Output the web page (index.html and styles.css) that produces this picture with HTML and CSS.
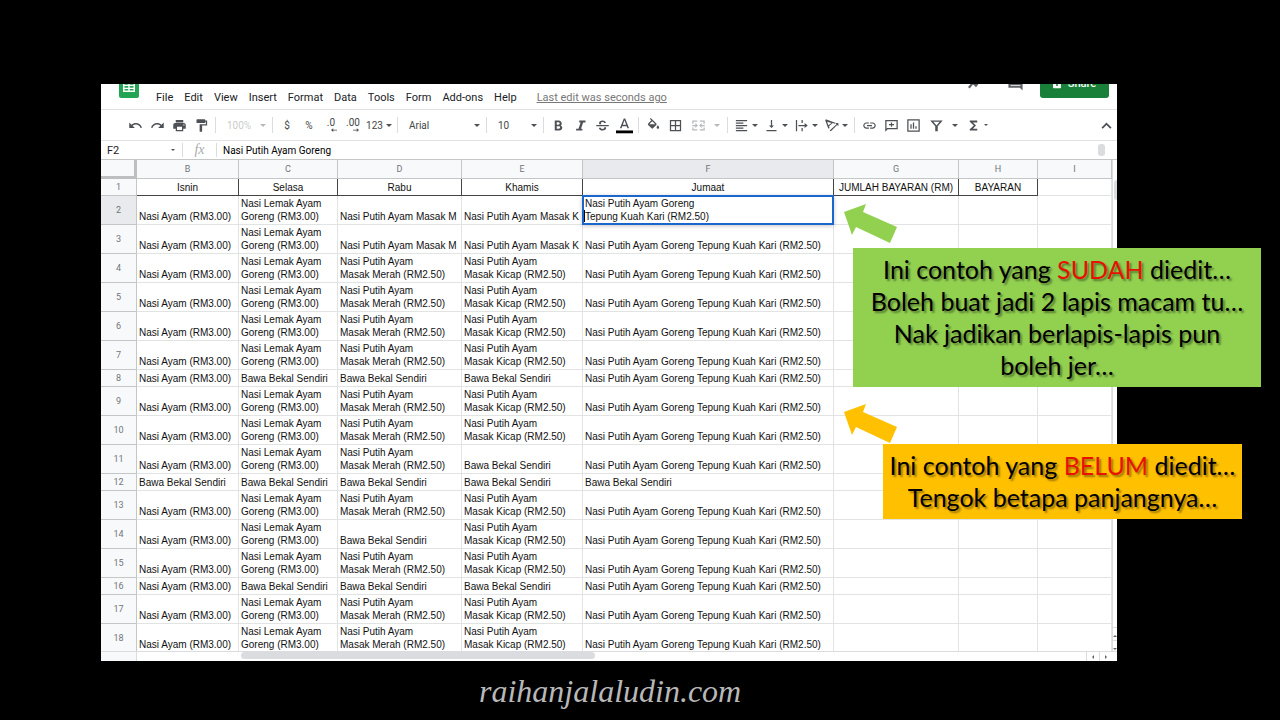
FILE: index.html
```html
<!DOCTYPE html>
<html lang="ms">
<head>
    <meta charset="UTF-8">
    <meta name="viewport" content="width=device-width, initial-scale=1.0">
    <title>raihanjalaludin.com</title>
    <link rel="stylesheet" href="styles.css">
</head>
<body>
    <main class="slide">
        <div class="sheet">
            <!-- Menu bar -->
            <header class="menubar">
                <svg class="logo" viewBox="0 0 20 27"><rect width="20" height="27" rx="2" fill="#23a455"/><path d="M4 10h12v11H4z" fill="#fff"/><path d="M5.500 11.500h3.800v2.200H5.500zM10.700 11.500h3.800v2.200h-3.800zM5.500 15h3.800v1.800H5.500zM10.700 15h3.800v1.800h-3.800zM5.500 18h3.800v1.600H5.500zM10.700 18h3.800v1.600h-3.800z" fill="#23a455"/></svg>
                <nav class="menu">
                    <button>File</button>
                    <button>Edit</button>
                    <button>View</button>
                    <button>Insert</button>
                    <button>Format</button>
                    <button>Data</button>
                    <button>Tools</button>
                    <button>Form</button>
                    <button>Add-ons</button>
                    <button>Help</button>
                </nav>
                <a class="last-edit" href="#">Last edit was seconds ago</a>
                <div class="header-actions">
                    <button class="head-icon" aria-label="Explore"><svg viewBox="0 0 24 24"><path d="M4 18l6-7 4 4 7-9" fill="none" stroke="#5f6368" stroke-width="3"/></svg></button>
                    <button class="head-icon" aria-label="Comments"><svg viewBox="0 0 24 24"><path d="M2 2h20v20l-4-4H2z" fill="#5f6368"/><path d="M5 6h14v1H5zM5 10h14v1H5zM5 14h14v1H5z" fill="#fff"/></svg></button>
                    <button class="share"><svg viewBox="0 0 10 14"><rect y="5" width="10" height="8" rx="1" fill="#fff"/><path d="M2.500 5V3a2.500 2.500 0 0 1 5 0v2" fill="none" stroke="#fff" stroke-width="1.500"/><circle cx="5" cy="9" r="1.300" fill="#188038"/></svg>Share</button>
                </div>
            </header>

            <!-- Toolbar -->
            <div class="toolbar">
                <button class="tool" aria-label="Undo"><svg viewBox="0 0 24 24"><path d="M12.500 8c-2.650 0-5.050.990-6.900 2.600L2 7v9h9l-3.620-3.620c1.390-1.160 3.160-1.880 5.120-1.880 3.540 0 6.550 2.310 7.600 5.500l2.370-.780C21.080 11.030 17.150 8 12.500 8z"/></svg></button>
                <button class="tool" aria-label="Redo"><svg viewBox="0 0 24 24"><path d="M18.400 10.600C16.550 8.990 14.150 8 11.500 8c-4.650 0-8.580 3.030-9.960 7.220L3.900 16c1.050-3.190 4.050-5.500 7.600-5.500 1.950 0 3.730.720 5.120 1.880L13 16h9V7l-3.600 3.600z"/></svg></button>
                <button class="tool" aria-label="Print"><svg viewBox="0 0 24 24"><path d="M19 8H5c-1.660 0-3 1.340-3 3v6h4v4h12v-4h4v-6c0-1.660-1.340-3-3-3zm-3 11H8v-5h8v5zm3-7c-.550 0-1-.450-1-1s.450-1 1-1 1 .450 1 1-.450 1-1 1zm-1-9H6v4h12V3z"/></svg></button>
                <button class="tool" aria-label="Paint format"><svg viewBox="0 0 24 24"><path d="M18 4V3c0-.550-.450-1-1-1H5c-.550 0-1 .450-1 1v4c0 .550.450 1 1 1h12c.550 0 1-.450 1-1V6h1v4H9v11c0 .550.450 1 1 1h2c.550 0 1-.450 1-1v-9h8V4h-3z"/></svg></button>
                <span class="sep"></span>
                <label class="picker picker-small disabled"><select aria-label="Zoom" disabled><option>100%</option></select></label>
                <span class="sep"></span>
                <button class="tool">$</button>
                <button class="tool">%</button>
                <button class="tool decimal" aria-label="Decrease decimal places">.0<svg viewBox="0 0 8 5"><path d="M3 0v2h5v1H3v2L0 2.500z"/></svg></button>
                <button class="tool decimal" aria-label="Increase decimal places">.00<svg viewBox="0 0 8 5"><path d="M5 0v2H0v1h5v2l3-2.500z"/></svg></button>
                <button class="tool split">123<i class="caret"></i></button>
                <span class="sep"></span>
                <label class="picker picker-font"><select aria-label="Font"><option>Arial</option></select></label>
                <span class="sep"></span>
                <label class="picker picker-small"><select aria-label="Font size"><option>10</option></select></label>
                <span class="sep"></span>
                <button class="tool" aria-label="Bold"><svg viewBox="0 0 24 24"><path d="M15.600 11.800c1-.700 1.600-1.800 1.600-2.800 0-2.800-2.200-5-5-5H6v16h7.500c2.500 0 4.500-2 4.500-4.500 0-1.600-.900-3-2.400-3.700zM9.200 6.800h2.600c1.100 0 2 .900 2 2s-.900 1.900-2 1.900H9.200zm3.400 10.300H9.200v-3.900h3.400c1.100 0 2 .900 2 2s-.900 1.900-2 1.900z"/></svg></button>
                <button class="tool" aria-label="Italic"><svg viewBox="0 0 24 24"><path d="M10 4v3h2.210l-3.420 10H5v3h10v-3h-2.210l3.420-10H20V4z"/></svg></button>
                <button class="tool" aria-label="Strikethrough"><svg viewBox="0 0 24 24"><path d="M17.500 8c-.400-2.300-2.300-4-5.500-4-3.100 0-5.500 1.500-5.500 4.200 0 .7.200 1.300.500 1.800h3.800c-.800-.4-1.300-.9-1.300-1.700C9.500 7.100 10.500 6.500 12 6.500s2.400.600 2.600 1.500zM2 11.200h20v2H2zM6.200 15.500c.200 3 2.600 4.500 5.900 4.500 3.400 0 5.700-1.600 5.700-4.400 0-.400 0-.700-.100-1h-3.200c.2.300.3.600.3 1 0 1.200-1.100 1.800-2.700 1.800-1.700 0-2.700-.700-2.900-1.900z"/></svg></button>
                <button class="tool text-color" aria-label="Text color"><svg viewBox="0 0 24 24"><path d="M11 2L5.500 16h2.250l1.120-3h6.250l1.120 3h2.250L13 2h-2zm-1.380 9L12 4.670 14.380 11H9.620z"/><path d="M0 19h24v4H0z" fill="#000"/></svg></button>
                <span class="sep"></span>
                <button class="tool" aria-label="Fill color"><svg viewBox="0 0 24 24"><path d="M16.560 8.940L7.620 0 6.210 1.410l2.380 2.380-5.150 5.150c-.590.590-.590 1.540 0 2.120l5.500 5.500c.290.290.680.440 1.060.440s.770-.150 1.060-.440l5.500-5.500c.590-.580.590-1.530 0-2.120zM5.210 10L10 5.210 14.790 10H5.210zM19 11.500s-2 2.170-2 3.500c0 1.100.900 2 2 2s2-.900 2-2c0-1.330-2-3.500-2-3.500z"/></svg></button>
                <button class="tool" aria-label="Borders"><svg viewBox="0 0 24 24"><path d="M3 3v18h18V3H3zm8 16H5v-6h6v6zm0-8H5V5h6v6zm8 8h-6v-6h6v6zm0-8h-6V5h6v6z"/></svg></button>
                <button class="tool split-wide disabled" aria-label="Merge cells" disabled><svg viewBox="0 0 24 24"><path d="M2 4h8v2H4v3H2zM14 4h8v5h-2V6h-6zM2 15h2v3h6v2H2zM20 15h2v5h-8v-2h6zM2 11h5V8l4 4-4 4v-3H2zM22 11h-5V8l-4 4 4 4v-3h5z"/></svg><i class="caret"></i></button>
                <span class="sep"></span>
                <button class="tool split" aria-label="Horizontal align"><svg viewBox="0 0 24 24"><path d="M3 3h18v2H3zM3 7h12v2H3zM3 11h18v2H3zM3 15h12v2H3zM3 19h18v2H3z"/></svg><i class="caret"></i></button>
                <button class="tool split" aria-label="Vertical align"><svg viewBox="0 0 24 24"><path d="M16 12h-3V3h-2v9H8l4 4zM4 19h16v2H4z"/></svg><i class="caret"></i></button>
                <button class="tool split" aria-label="Text wrapping"><svg viewBox="0 0 24 24"><path d="M3 3h2v18H3zM12 3h2v5h-2zM12 16h2v5h-2zM7 11h10V8l5 4-5 4v-3H7z"/></svg><i class="caret"></i></button>
                <button class="tool split" aria-label="Text rotation"><svg viewBox="0 0 24 24"><path d="M2 4l5 13 2-1-1-3 6-5 3 1 2-1L3 2zm3 2l7 2-5 3.500zM9 20L20 10l-2-2h5v5l-2-2-10 10z"/></svg><i class="caret"></i></button>
                <span class="sep"></span>
                <button class="tool" aria-label="Insert link"><svg viewBox="0 0 24 24"><path d="M3.900 12c0-1.710 1.390-3.100 3.100-3.100h4V7H7c-2.760 0-5 2.240-5 5s2.240 5 5 5h4v-1.900H7c-1.710 0-3.100-1.390-3.100-3.100zM8 13h8v-2H8v2zm9-6h-4v1.900h4c1.710 0 3.100 1.390 3.100 3.100s-1.390 3.100-3.100 3.100h-4V17h4c2.760 0 5-2.240 5-5s-2.240-5-5-5z"/></svg></button>
                <button class="tool" aria-label="Insert comment"><svg viewBox="0 0 24 24"><path d="M2 3h20v15H6l-4 4zm2 2v12l1-1h15V5zM11 7h2v2.500h3v2h-3V14h-2v-2.500H8v-2h3z"/></svg></button>
                <button class="tool" aria-label="Insert chart"><svg viewBox="0 0 24 24"><path d="M2 2h20v20H2zm2 2v16h16V4zM7 10h2v7H7zM11 7h2v10h-2zM15 13h2v4h-2z"/></svg></button>
                <button class="tool split-wide" aria-label="Filter"><svg viewBox="0 0 24 24"><path d="M2 4h20l-8 9v8h-4v-8zm5 2l5 6 5-6z"/></svg><i class="caret"></i></button>
                <button class="tool split" aria-label="Functions"><svg viewBox="0 0 24 24"><path d="M18 4H6v2l6.500 6L6 18v2h12v-3h-7l5-5-5-5h7z"/></svg><i class="caret small"></i></button>
                <button class="tool collapse" aria-label="Hide the menus"><svg viewBox="0 0 24 24"><path d="M12 7l-8 8 2 2 6-6 6 6 2-2z"/></svg></button>
            </div>

            <!-- Formula bar -->
            <div class="formula-bar">
                <input class="name-box" type="text" value="F2" aria-label="Name box">
                <i class="caret small"></i>
                <span class="fx">fx</span>
                <input class="formula" type="text" value="Nasi Putih Ayam Goreng" aria-label="Formula">
                <span class="formula-thumb"></span>
            </div>

            <!-- Grid -->
            <div class="grid-area">
                <table class="grid">
                    <colgroup>
                        <col class="col-num"><col class="col-b"><col class="col-c"><col class="col-d"><col class="col-e"><col class="col-f"><col class="col-g"><col class="col-h"><col>
                    </colgroup>
                    <thead>
                        <tr><td class="corner"></td><th>B</th><th>C</th><th>D</th><th>E</th><th class="active">F</th><th>G</th><th>H</th><th>I</th></tr>
                    </thead>
                    <tbody>
                        <tr class="titles"><th>1</th><td>Isnin</td><td>Selasa</td><td>Rabu</td><td>Khamis</td><td>Jumaat</td><td>JUMLAH BAYARAN (RM)</td><td>BAYARAN</td><td></td></tr>
                        <tr class="tall">
                            <th class="active">2</th><td>Nasi Ayam (RM3.00)</td><td>Nasi Lemak Ayam<br>Goreng (RM3.00)</td><td>Nasi Putih Ayam Masak M</td><td>Nasi Putih Ayam Masak K</td>
                            <td class="editing"><textarea class="editor" aria-label="F2">Nasi Putih Ayam Goreng
Tepung Kuah Kari (RM2.50)</textarea><span class="cursor"></span></td><td></td><td></td><td></td>
                        </tr>
                        <tr class="tall"><th>3</th><td>Nasi Ayam (RM3.00)</td><td>Nasi Lemak Ayam<br>Goreng (RM3.00)</td><td>Nasi Putih Ayam Masak M</td><td>Nasi Putih Ayam Masak K</td><td>Nasi Putih Ayam Goreng Tepung Kuah Kari (RM2.50)</td><td></td><td></td><td></td></tr>
                        <tr class="tall"><th>4</th><td>Nasi Ayam (RM3.00)</td><td>Nasi Lemak Ayam<br>Goreng (RM3.00)</td><td>Nasi Putih Ayam<br>Masak Merah (RM2.50)</td><td>Nasi Putih Ayam<br>Masak Kicap (RM2.50)</td><td>Nasi Putih Ayam Goreng Tepung Kuah Kari (RM2.50)</td><td></td><td></td><td></td></tr>
                        <tr class="tall"><th>5</th><td>Nasi Ayam (RM3.00)</td><td>Nasi Lemak Ayam<br>Goreng (RM3.00)</td><td>Nasi Putih Ayam<br>Masak Merah (RM2.50)</td><td>Nasi Putih Ayam<br>Masak Kicap (RM2.50)</td><td>Nasi Putih Ayam Goreng Tepung Kuah Kari (RM2.50)</td><td></td><td></td><td></td></tr>
                        <tr class="tall"><th>6</th><td>Nasi Ayam (RM3.00)</td><td>Nasi Lemak Ayam<br>Goreng (RM3.00)</td><td>Nasi Putih Ayam<br>Masak Merah (RM2.50)</td><td>Nasi Putih Ayam<br>Masak Kicap (RM2.50)</td><td>Nasi Putih Ayam Goreng Tepung Kuah Kari (RM2.50)</td><td></td><td></td><td></td></tr>
                        <tr class="tall"><th>7</th><td>Nasi Ayam (RM3.00)</td><td>Nasi Lemak Ayam<br>Goreng (RM3.00)</td><td>Nasi Putih Ayam<br>Masak Merah (RM2.50)</td><td>Nasi Putih Ayam<br>Masak Kicap (RM2.50)</td><td>Nasi Putih Ayam Goreng Tepung Kuah Kari (RM2.50)</td><td></td><td></td><td></td></tr>
                        <tr><th>8</th><td>Nasi Ayam (RM3.00)</td><td>Bawa Bekal Sendiri</td><td>Bawa Bekal Sendiri</td><td>Bawa Bekal Sendiri</td><td>Nasi Putih Ayam Goreng Tepung Kuah Kari (RM2.50)</td><td></td><td></td><td></td></tr>
                        <tr class="tall"><th>9</th><td>Nasi Ayam (RM3.00)</td><td>Nasi Lemak Ayam<br>Goreng (RM3.00)</td><td>Nasi Putih Ayam<br>Masak Merah (RM2.50)</td><td>Nasi Putih Ayam<br>Masak Kicap (RM2.50)</td><td>Nasi Putih Ayam Goreng Tepung Kuah Kari (RM2.50)</td><td></td><td></td><td></td></tr>
                        <tr class="tall"><th>10</th><td>Nasi Ayam (RM3.00)</td><td>Nasi Lemak Ayam<br>Goreng (RM3.00)</td><td>Nasi Putih Ayam<br>Masak Merah (RM2.50)</td><td>Nasi Putih Ayam<br>Masak Kicap (RM2.50)</td><td>Nasi Putih Ayam Goreng Tepung Kuah Kari (RM2.50)</td><td></td><td></td><td></td></tr>
                        <tr class="tall"><th>11</th><td>Nasi Ayam (RM3.00)</td><td>Nasi Lemak Ayam<br>Goreng (RM3.00)</td><td>Nasi Putih Ayam<br>Masak Merah (RM2.50)</td><td>Bawa Bekal Sendiri</td><td>Nasi Putih Ayam Goreng Tepung Kuah Kari (RM2.50)</td><td></td><td></td><td></td></tr>
                        <tr><th>12</th><td>Bawa Bekal Sendiri</td><td>Bawa Bekal Sendiri</td><td>Bawa Bekal Sendiri</td><td>Bawa Bekal Sendiri</td><td>Bawa Bekal Sendiri</td><td></td><td></td><td></td></tr>
                        <tr class="tall"><th>13</th><td>Nasi Ayam (RM3.00)</td><td>Nasi Lemak Ayam<br>Goreng (RM3.00)</td><td>Nasi Putih Ayam<br>Masak Merah (RM2.50)</td><td>Nasi Putih Ayam<br>Masak Kicap (RM2.50)</td><td>Nasi Putih Ayam Goreng Tepung Kuah Kari (RM2.50)</td><td></td><td></td><td></td></tr>
                        <tr class="tall"><th>14</th><td>Nasi Ayam (RM3.00)</td><td>Nasi Lemak Ayam<br>Goreng (RM3.00)</td><td>Bawa Bekal Sendiri</td><td>Nasi Putih Ayam<br>Masak Kicap (RM2.50)</td><td>Nasi Putih Ayam Goreng Tepung Kuah Kari (RM2.50)</td><td></td><td></td><td></td></tr>
                        <tr class="tall"><th>15</th><td>Nasi Ayam (RM3.00)</td><td>Nasi Lemak Ayam<br>Goreng (RM3.00)</td><td>Nasi Putih Ayam<br>Masak Merah (RM2.50)</td><td>Nasi Putih Ayam<br>Masak Kicap (RM2.50)</td><td>Nasi Putih Ayam Goreng Tepung Kuah Kari (RM2.50)</td><td></td><td></td><td></td></tr>
                        <tr><th>16</th><td>Nasi Ayam (RM3.00)</td><td>Bawa Bekal Sendiri</td><td>Bawa Bekal Sendiri</td><td>Bawa Bekal Sendiri</td><td>Nasi Putih Ayam Goreng Tepung Kuah Kari (RM2.50)</td><td></td><td></td><td></td></tr>
                        <tr class="tall"><th>17</th><td>Nasi Ayam (RM3.00)</td><td>Nasi Lemak Ayam<br>Goreng (RM3.00)</td><td>Nasi Putih Ayam<br>Masak Merah (RM2.50)</td><td>Nasi Putih Ayam<br>Masak Kicap (RM2.50)</td><td>Nasi Putih Ayam Goreng Tepung Kuah Kari (RM2.50)</td><td></td><td></td><td></td></tr>
                        <tr class="tall"><th>18</th><td>Nasi Ayam (RM3.00)</td><td>Nasi Lemak Ayam<br>Goreng (RM3.00)</td><td>Nasi Putih Ayam<br>Masak Merah (RM2.50)</td><td>Nasi Putih Ayam<br>Masak Kicap (RM2.50)</td><td>Nasi Putih Ayam Goreng Tepung Kuah Kari (RM2.50)</td><td></td><td></td><td></td></tr>
                    </tbody>
                </table>
                <div class="vscroll">
                    <span class="vthumb"></span>
                    <span class="varrow"><svg viewBox="0 0 4 4"><path d="M0 3l2-2 2 2z"/></svg></span>
                    <span class="varrow"><svg viewBox="0 0 4 4"><path d="M0 1l2 2 2-2z"/></svg></span>
                </div>
            </div>
            <div class="hscroll">
                <span class="hscroll-head"></span>
                <span class="hthumb"></span>
                <span class="harrow"><svg viewBox="0 0 4 4"><path d="M3 0L1 2l2 2z"/></svg></span>
                <span class="harrow"><svg viewBox="0 0 4 4"><path d="M1 0l2 2-2 2z"/></svg></span>
            </div>

            <!-- Notes over the sheet -->
            <svg class="arrow arrow-done" viewBox="0 0 54 39"><path d="M0 8L22 0l-3 8 34 15-7 16-34-16-4 8z"/></svg>
            <p class="note note-done">Ini contoh yang <em>SUDAH</em> diedit…<br>Boleh buat jadi 2 lapis macam tu…<br>Nak jadikan berlapis-lapis pun<br>boleh jer…</p>
            <svg class="arrow arrow-todo" viewBox="0 0 54 39"><path d="M0 8L22 0l-3 8 34 15-7 16-34-16-4 8z"/></svg>
            <p class="note note-todo">Ini contoh yang <em>BELUM</em> diedit…<br>Tengok betapa panjangnya…</p>
        </div>
        <footer class="site">raihanjalaludin.com</footer>
    </main>
</body>
</html>
```

FILE: styles.css
```css
* {
    box-sizing: border-box;
}

body {
    margin: 0;
    background-color: #000;
    font-family: Roboto, sans-serif;
    font-size: 11px;
    color: #202124;
}

button, input, select, textarea {
    margin: 0;
    padding: 0;
    border: none;
    background: none;
    font: inherit;
    color: inherit;
}

.slide {
    min-height: 100vh;
    padding: 84px 163px 0 101px;
    overflow: hidden;
}

/* Spreadsheet window */
.sheet {
    position: relative;
    background-color: #fff;
}

/* Menu bar, its top is cut off */
.menubar {
    display: flex;
    align-items: flex-end;
    height: 26px;
    padding: 0 8px 11px 18px;
    border-bottom: 1px solid #e0e2e5;
    overflow: hidden;
}

.logo {
    flex: none;
    width: 20px;
    height: 27px;
}

.menu {
    display: flex;
    gap: 11px;
    margin-left: 17px;
}

.menu button, .last-edit {
    line-height: 14px;
    margin-bottom: -7px;
    white-space: nowrap;
}

.last-edit {
    margin-left: 20px;
    color: #777;
}

.header-actions {
    display: flex;
    align-items: flex-end;
    gap: 24px;
    margin-left: auto;
}

.head-icon {
    width: 17px;
    height: 17px;
    margin-bottom: 6px;
}

.head-icon svg {
    display: block;
}

.share {
    display: flex;
    align-items: center;
    justify-content: center;
    gap: 7px;
    width: 69px;
    height: 30px;
    margin-left: -8px;
    border-radius: 3px;
    background-color: #188038;
    color: #fff;
    font-weight: 500;
}

.share svg {
    width: 8px;
    height: 11px;
}

/* Toolbar */
.toolbar {
    display: flex;
    align-items: center;
    height: 31px;
    padding: 0 0 0 23px;
    border-bottom: 1px solid #e0e2e5;
    color: #444746;
    font-size: 10px;
}

.tool {
    display: flex;
    flex: none;
    align-items: center;
    justify-content: center;
    width: 22px;
    height: 22px;
}

.tool svg {
    width: 15px;
    height: 15px;
    fill: #4d5156;
}

.tool.split {
    width: 30px;
    gap: 3px;
}

.tool.split-wide {
    width: 38px;
    gap: 8px;
}

.tool.decimal {
    flex-direction: column;
    align-items: center;
    line-height: 10px;
}

.tool.decimal svg {
    width: 6px;
    height: 4px;
    margin-left: 6px;
}

.tool.text-color svg {
    width: 17px;
    height: 17px;
}

.tool.collapse {
    margin-left: auto;
}

.tool.disabled, .picker.disabled {
    opacity: 0.4;
}

.caret, .picker::after {
    flex: none;
    content: "";
    border: 3px solid transparent;
    border-top-color: #4d5156;
    border-bottom: none;
}

.caret.small {
    border-width: 2px;
    border-bottom: none;
}

.sep {
    flex: none;
    width: 1px;
    height: 16px;
    margin: 0 3px;
    background-color: #dadce0;
}

.picker {
    display: flex;
    align-items: center;
    padding: 0 3px 0 8px;
}

.picker select {
    flex: 1;
    min-width: 0;
    appearance: none;
}

.picker-small {
    width: 50px;
}

.picker-font {
    width: 82px;
}

/* Formula bar */
.formula-bar {
    display: flex;
    align-items: center;
    height: 19px;
    padding: 0 12px 0 6px;
    border-bottom: 1px solid #c4c7c5;
}

.name-box {
    width: 64px;
}

.fx {
    width: 35px;
    margin-left: 7px;
    border-left: 1px solid #dadce0;
    border-right: 1px solid #dadce0;
    color: #a8abae;
    font-family: "Liberation Serif", serif;
    font-size: 14px;
    font-style: italic;
    line-height: 14px;
    text-align: center;
}

.formula {
    flex: 1;
    margin-left: 6px;
    color: #000;
    font-size: 10px;
}

.formula-thumb {
    width: 7px;
    height: 12px;
    border-radius: 3px;
    background-color: #dadce0;
}

/* Cells */
.grid-area {
    display: flex;
}

.grid {
    flex: 1;
    width: 100%;
    table-layout: fixed;
    border-spacing: 0;
}

.col-num { width: 36px; }
.col-b { width: 102px; }
.col-c { width: 99px; }
.col-d { width: 124px; }
.col-e { width: 121px; }
.col-f { width: 251px; }
.col-g { width: 125px; }
.col-h { width: 79px; }

.grid th, .grid .corner {
    height: 17px;
    padding: 0;
    border-right: 1px solid #c4c7c5;
    border-bottom: 1px solid #c4c7c5;
    background-color: #f8f9fa;
    color: #70757a;
    font-size: 9px;
    font-weight: 400;
    line-height: 10px;
}

.grid thead th, .grid .corner {
    height: 19px;
}

.grid .corner {
    border-right: 3px solid #bdbfc1;
    border-bottom: 3px solid #bdbfc1;
}

.grid th.active {
    background-color: #e8eaed;
}

.grid tbody td {
    height: 17px;
    padding: 0 0 1px 2px;
    border-right: 1px solid #e2e3e3;
    border-bottom: 1px solid #e2e3e3;
    color: #111;
    font-family: "Liberation Sans", sans-serif;
    font-size: 10px;
    line-height: 13px;
    vertical-align: bottom;
    white-space: nowrap;
    overflow: hidden;
}

.grid tbody .tall th, .grid tbody .tall td {
    height: 29px;
}

.grid tbody .titles td {
    padding: 0 0 1px;
    border-bottom-color: #444;
    text-align: center;
}

.grid tbody .titles td:not(:last-child) {
    border-right-color: #444;
}

.grid tbody .titles td:last-child {
    border-bottom-color: #e2e3e3;
}

/* Open cell editor */
.grid tbody .editing {
    position: relative;
    overflow: visible;
}

.editor {
    position: absolute;
    top: -1px;
    left: -1px;
    width: calc(100% + 2px);
    height: 30px;
    padding: 0 1px;
    border: 2px solid #1a66cc;
    background-color: #fff;
    box-shadow: 0 1px 4px rgba(60, 64, 67, 0.3);
    line-height: 13px;
    overflow: hidden;
    resize: none;
}

.cursor {
    position: absolute;
    top: 14px;
    left: 1px;
    width: 1px;
    height: 12px;
    background-color: #000;
}

/* Scrollbars */
.vscroll {
    display: flex;
    flex-direction: column;
    width: 5px;
    padding-top: 20px;
    border-left: 1px solid #dadce0;
    overflow: hidden;
}

.vthumb {
    width: 6px;
    height: 20px;
    margin: 0 0 auto 1px;
    border-radius: 3px 0 0 3px;
    background-color: #dadce0;
}

.varrow {
    height: 13px;
    border-top: 1px solid #dadce0;
    text-align: right;
}

.varrow svg, .harrow svg {
    width: 4px;
    height: 4px;
    fill: #5f6368;
}

.hscroll {
    position: relative;
    display: flex;
    height: 10px;
    margin-top: -2px;
    padding-right: 5px;
    border-top: 1px solid #dadce0;
    background-color: #fff;
}

.hscroll-head {
    width: 36px;
    border-right: 1px solid #dadce0;
    background-color: #f8f9fa;
}

.hthumb {
    width: 35%;
    height: 7px;
    margin: 0 auto 0 104px;
    border-radius: 4px;
    background-color: #dadce0;
}

.harrow {
    display: flex;
    align-items: center;
    justify-content: center;
    width: 13px;
    border-left: 1px solid #dadce0;
}

/* Notes and their arrows */
.note {
    position: absolute;
    margin: 0;
    padding: 5px 0 6px;
    font-family: Lato, sans-serif;
    font-size: 25px;
    line-height: 32px;
    text-align: center;
    white-space: nowrap;
    color: #000;
    text-shadow: 2px 2px 2px rgba(0, 0, 0, 0.4);
}

.note em {
    font-style: normal;
    color: #e81000;
}

.note-done {
    top: 164px;
    left: 752px;
    width: 408px;
    background-color: #92d050;
}

.note-todo {
    top: 360px;
    left: 782px;
    width: 359px;
    background-color: #ffc000;
}

.arrow {
    position: absolute;
    left: 743px;
    width: 54px;
    height: 39px;
}

.arrow-done {
    top: 120px;
    fill: #92d050;
}

.arrow-todo {
    top: 320px;
    fill: #ffc000;
}

/* Signature under the sheet */
.site {
    padding: 10px 0 0 378px;
    color: #b8b8b8;
    font-family: "Liberation Serif", serif;
    font-size: 32px;
    font-style: italic;
    line-height: 40px;
}
```
